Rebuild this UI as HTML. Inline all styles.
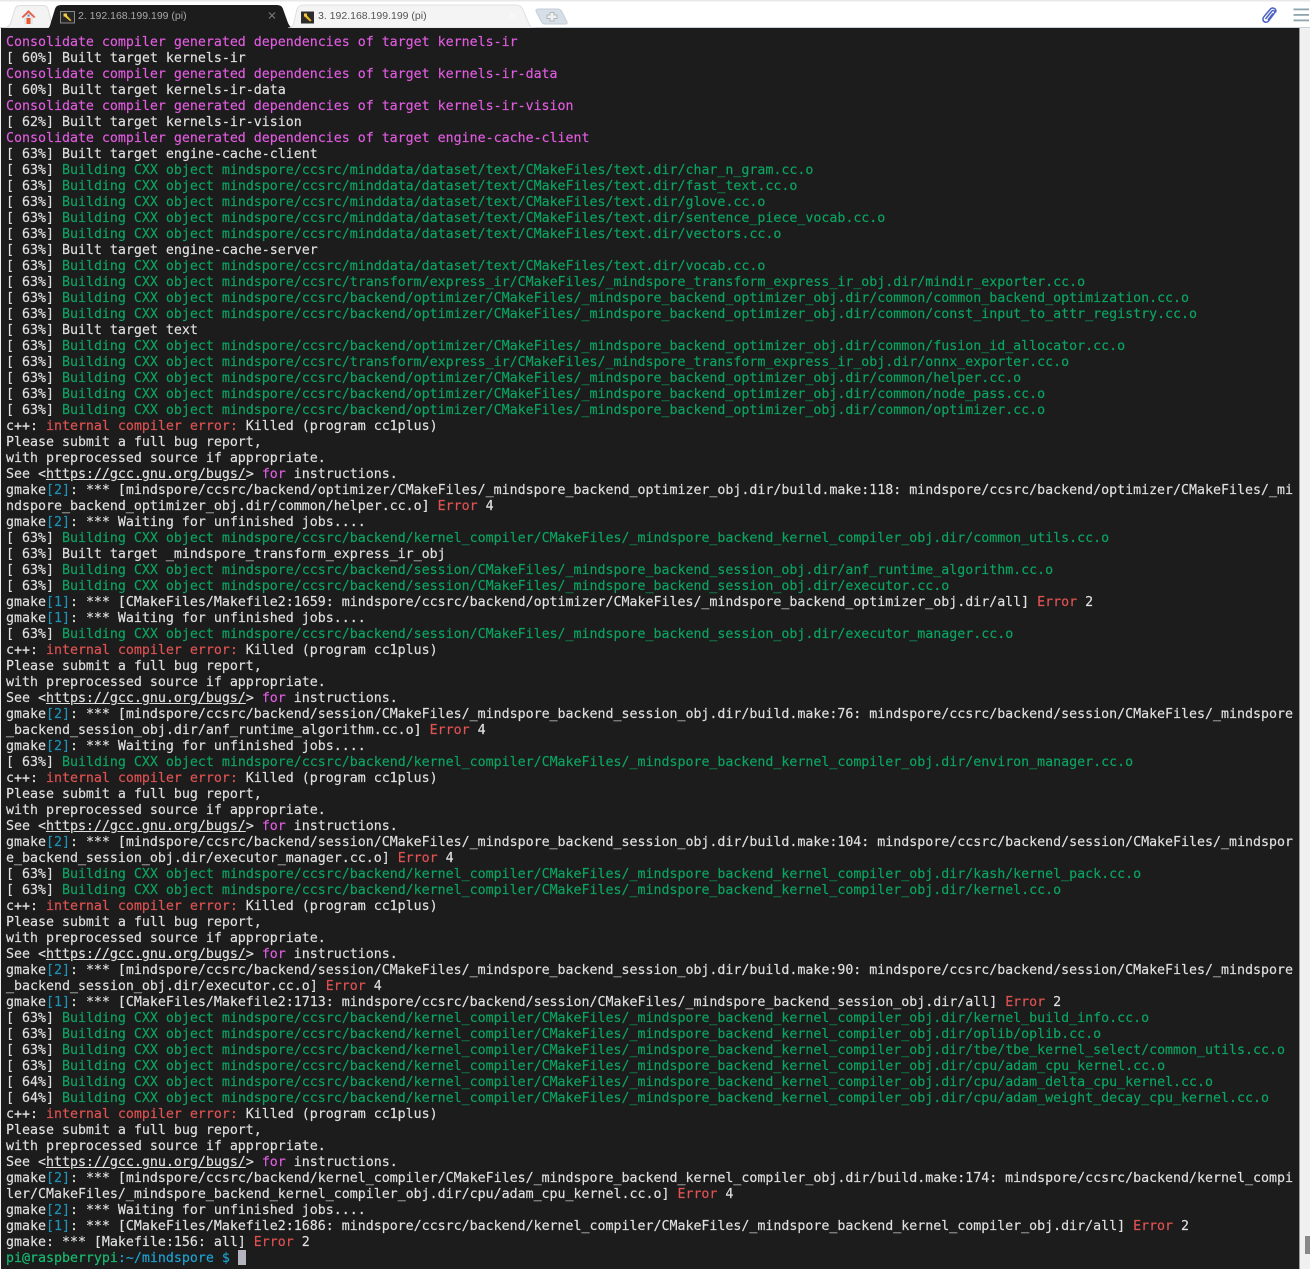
<!DOCTYPE html>
<html><head><meta charset="utf-8"><style>
html,body{margin:0;padding:0;width:1310px;height:1269px;overflow:hidden;background:#f0f0f0}
#top{position:absolute;left:0;top:0;width:1310px;height:29px;background:#fff}
#top svg{position:absolute;left:0;top:0}
.tab{position:absolute;top:10px;font:10.5px/12px "Liberation Sans",sans-serif;}
#term{position:absolute;left:1px;top:28px;width:1298px;height:1241px;background:#1c1c1c}
#side{position:absolute;left:1299px;top:28px;width:11px;height:1241px;background:#f0f0f0;border-left:1px solid #999;box-sizing:border-box}
#thumb{position:absolute;left:1305px;top:1236px;width:5px;height:18px;background:#888}
#cur{position:absolute;left:238px;top:1250px;width:8px;height:15px;background:#b4b4be}
pre{position:absolute;left:6px;top:35px;margin:0;font:13.3px/16px "DejaVu Sans Mono",monospace;letter-spacing:-.012px;color:#e0e0e0;filter:blur(.25px);-webkit-text-stroke:.15px}
i{font-style:normal}
.m{color:#e25ce0}.g{color:#0ba560}.r{color:#e25252}.c{color:#1c93b8}.u{text-decoration:underline}
.p{color:#16bd72}.b{color:#1ea3d2}
</style></head><body>
<div id="top"><svg width="1310" height="29" viewBox="0 0 1310 29">
<rect x="0" y="0" width="1310" height="1.5" fill="#e8e8e8"/>
<rect x="0" y="27" width="1310" height="1.5" fill="#c8d0d8"/>
<path d="M3 28C8 28 10 25 11 22L15 9C16 6 18 5.500 21 5.500H43C46 5.500 47 6.500 48 9L53 28Z" fill="#f3f3f3" stroke="#ddd"/>
<path d="M46 29C49 29 50 26 51 22L55 9C56 6 58 5 62 5H276C280 5 282 6 283 9L288 23C290 27 292 29 296 29Z" fill="#1c1c1c"/>
<path d="M288 28C292 28 293 26 294 22L297 9C298 6 300 5 304 5H515C520 5 522 7 523 10L529 24C530 27 532 28 536 28Z" fill="#f4f4f4" stroke="#e0e0e0"/>
<path d="M538 9H558C560 9 561 10 562 12L567 22C567.500 23.500 567 24 565 24H545C543 24 542 23 541 21L536 11C535.500 10 536.500 9 538 9Z" fill="#d6dfe8" stroke="#c5ced8"/>
<path d="M550 12.500H554V15H557V18.500H554V21H550V18.500H547V15H550Z" fill="#eef1f4" stroke="#a8a8a8" stroke-width=".8"/>
<path d="M21.500 17L28.500 10L35.500 17L34 18L28.500 13L23 18Z" fill="#e8604a"/>
<path d="M24 17.500L28.500 13L33 17.500V24H24Z" fill="#e4e7ea"/>
<rect x="26.500" y="18" width="4" height="6" fill="#e85a2e"/>
<rect x="27.500" y="14.500" width="2" height="2" fill="#5a8fc0"/>
<rect x="60.500" y="11.500" width="14" height="11.500" fill="#262626" stroke="#888"/>
<path d="M65 14.500L67 15.500L71.500 20.500L70 21L64.500 16.500Z" fill="#f0c030"/>
<rect x="63.500" y="13.500" width="3.500" height="3" fill="#f5cf48"/>
<path d="M269 12.500L275 18.500M275 12.500L269 18.500" stroke="#777" stroke-width="1.200"/>
<rect x="301" y="11.500" width="13" height="12" fill="#2c2c2c"/>
<path d="M305 14.500L307 15.500L311.500 20.500L310 21.500L304.500 16.500Z" fill="#f0b820"/>
<rect x="304" y="13.500" width="3" height="3" fill="#f5c93a"/>
<path d="M509.500 13L515.500 19M515.500 13L509.500 19" stroke="#fafafa" stroke-width="1.200"/>
<path d="M1268 20L1273 13.500M1265.500 19L1271.500 11.500C1273 9.500 1275.500 11 1274.500 13L1268.500 21C1266.500 23.500 1262.500 22 1263 18.500C1263.200 17.500 1264 16.500 1264.500 16L1270 9.500C1272.500 6.500 1277 8.500 1275.500 12.500" fill="none" stroke="#4a60c4" stroke-width="1.500"/>
<rect x="1293.500" y="8.500" width="15.500" height="1.800" fill="#8fa5ad"/>
<rect x="1293.500" y="14" width="15.500" height="1.800" fill="#8fa5ad"/>
<rect x="1293.500" y="19.500" width="15.500" height="1.800" fill="#8fa5ad"/>
</svg>
<div class="tab" style="left:78px;color:#a8a8a8">2. 192.168.199.199 (pi)</div>
<div class="tab" style="left:318px;color:#555">3. 192.168.199.199 (pi)</div>
</div>
<div id="term"></div><div id="side"></div><div id="thumb"></div>
<pre><i class="m">Consolidate compiler generated dependencies of target kernels-ir</i>
[ 60%] Built target kernels-ir
<i class="m">Consolidate compiler generated dependencies of target kernels-ir-data</i>
[ 60%] Built target kernels-ir-data
<i class="m">Consolidate compiler generated dependencies of target kernels-ir-vision</i>
[ 62%] Built target kernels-ir-vision
<i class="m">Consolidate compiler generated dependencies of target engine-cache-client</i>
[ 63%] Built target engine-cache-client
[ 63%] <i class="g">Building CXX object mindspore/ccsrc/minddata/dataset/text/CMakeFiles/text.dir/char_n_gram.cc.o</i>
[ 63%] <i class="g">Building CXX object mindspore/ccsrc/minddata/dataset/text/CMakeFiles/text.dir/fast_text.cc.o</i>
[ 63%] <i class="g">Building CXX object mindspore/ccsrc/minddata/dataset/text/CMakeFiles/text.dir/glove.cc.o</i>
[ 63%] <i class="g">Building CXX object mindspore/ccsrc/minddata/dataset/text/CMakeFiles/text.dir/sentence_piece_vocab.cc.o</i>
[ 63%] <i class="g">Building CXX object mindspore/ccsrc/minddata/dataset/text/CMakeFiles/text.dir/vectors.cc.o</i>
[ 63%] Built target engine-cache-server
[ 63%] <i class="g">Building CXX object mindspore/ccsrc/minddata/dataset/text/CMakeFiles/text.dir/vocab.cc.o</i>
[ 63%] <i class="g">Building CXX object mindspore/ccsrc/transform/express_ir/CMakeFiles/_mindspore_transform_express_ir_obj.dir/mindir_exporter.cc.o</i>
[ 63%] <i class="g">Building CXX object mindspore/ccsrc/backend/optimizer/CMakeFiles/_mindspore_backend_optimizer_obj.dir/common/common_backend_optimization.cc.o</i>
[ 63%] <i class="g">Building CXX object mindspore/ccsrc/backend/optimizer/CMakeFiles/_mindspore_backend_optimizer_obj.dir/common/const_input_to_attr_registry.cc.o</i>
[ 63%] Built target text
[ 63%] <i class="g">Building CXX object mindspore/ccsrc/backend/optimizer/CMakeFiles/_mindspore_backend_optimizer_obj.dir/common/fusion_id_allocator.cc.o</i>
[ 63%] <i class="g">Building CXX object mindspore/ccsrc/transform/express_ir/CMakeFiles/_mindspore_transform_express_ir_obj.dir/onnx_exporter.cc.o</i>
[ 63%] <i class="g">Building CXX object mindspore/ccsrc/backend/optimizer/CMakeFiles/_mindspore_backend_optimizer_obj.dir/common/helper.cc.o</i>
[ 63%] <i class="g">Building CXX object mindspore/ccsrc/backend/optimizer/CMakeFiles/_mindspore_backend_optimizer_obj.dir/common/node_pass.cc.o</i>
[ 63%] <i class="g">Building CXX object mindspore/ccsrc/backend/optimizer/CMakeFiles/_mindspore_backend_optimizer_obj.dir/common/optimizer.cc.o</i>
c++: <i class="r">internal compiler error:</i> Killed (program cc1plus)
Please submit a full bug report,
with preprocessed source if appropriate.
See &lt;<i class="u">https://gcc.gnu.org/bugs/</i>&gt; <i class="m">for</i> instructions.
gmake<i class="c">[2]</i>: *** [mindspore/ccsrc/backend/optimizer/CMakeFiles/_mindspore_backend_optimizer_obj.dir/build.make:118: mindspore/ccsrc/backend/optimizer/CMakeFiles/_mi
ndspore_backend_optimizer_obj.dir/common/helper.cc.o] <i class="r">Error</i> 4
gmake<i class="c">[2]</i>: *** Waiting for unfinished jobs....
[ 63%] <i class="g">Building CXX object mindspore/ccsrc/backend/kernel_compiler/CMakeFiles/_mindspore_backend_kernel_compiler_obj.dir/common_utils.cc.o</i>
[ 63%] Built target _mindspore_transform_express_ir_obj
[ 63%] <i class="g">Building CXX object mindspore/ccsrc/backend/session/CMakeFiles/_mindspore_backend_session_obj.dir/anf_runtime_algorithm.cc.o</i>
[ 63%] <i class="g">Building CXX object mindspore/ccsrc/backend/session/CMakeFiles/_mindspore_backend_session_obj.dir/executor.cc.o</i>
gmake<i class="c">[1]</i>: *** [CMakeFiles/Makefile2:1659: mindspore/ccsrc/backend/optimizer/CMakeFiles/_mindspore_backend_optimizer_obj.dir/all] <i class="r">Error</i> 2
gmake<i class="c">[1]</i>: *** Waiting for unfinished jobs....
[ 63%] <i class="g">Building CXX object mindspore/ccsrc/backend/session/CMakeFiles/_mindspore_backend_session_obj.dir/executor_manager.cc.o</i>
c++: <i class="r">internal compiler error:</i> Killed (program cc1plus)
Please submit a full bug report,
with preprocessed source if appropriate.
See &lt;<i class="u">https://gcc.gnu.org/bugs/</i>&gt; <i class="m">for</i> instructions.
gmake<i class="c">[2]</i>: *** [mindspore/ccsrc/backend/session/CMakeFiles/_mindspore_backend_session_obj.dir/build.make:76: mindspore/ccsrc/backend/session/CMakeFiles/_mindspore
_backend_session_obj.dir/anf_runtime_algorithm.cc.o] <i class="r">Error</i> 4
gmake<i class="c">[2]</i>: *** Waiting for unfinished jobs....
[ 63%] <i class="g">Building CXX object mindspore/ccsrc/backend/kernel_compiler/CMakeFiles/_mindspore_backend_kernel_compiler_obj.dir/environ_manager.cc.o</i>
c++: <i class="r">internal compiler error:</i> Killed (program cc1plus)
Please submit a full bug report,
with preprocessed source if appropriate.
See &lt;<i class="u">https://gcc.gnu.org/bugs/</i>&gt; <i class="m">for</i> instructions.
gmake<i class="c">[2]</i>: *** [mindspore/ccsrc/backend/session/CMakeFiles/_mindspore_backend_session_obj.dir/build.make:104: mindspore/ccsrc/backend/session/CMakeFiles/_mindspor
e_backend_session_obj.dir/executor_manager.cc.o] <i class="r">Error</i> 4
[ 63%] <i class="g">Building CXX object mindspore/ccsrc/backend/kernel_compiler/CMakeFiles/_mindspore_backend_kernel_compiler_obj.dir/kash/kernel_pack.cc.o</i>
[ 63%] <i class="g">Building CXX object mindspore/ccsrc/backend/kernel_compiler/CMakeFiles/_mindspore_backend_kernel_compiler_obj.dir/kernel.cc.o</i>
c++: <i class="r">internal compiler error:</i> Killed (program cc1plus)
Please submit a full bug report,
with preprocessed source if appropriate.
See &lt;<i class="u">https://gcc.gnu.org/bugs/</i>&gt; <i class="m">for</i> instructions.
gmake<i class="c">[2]</i>: *** [mindspore/ccsrc/backend/session/CMakeFiles/_mindspore_backend_session_obj.dir/build.make:90: mindspore/ccsrc/backend/session/CMakeFiles/_mindspore
_backend_session_obj.dir/executor.cc.o] <i class="r">Error</i> 4
gmake<i class="c">[1]</i>: *** [CMakeFiles/Makefile2:1713: mindspore/ccsrc/backend/session/CMakeFiles/_mindspore_backend_session_obj.dir/all] <i class="r">Error</i> 2
[ 63%] <i class="g">Building CXX object mindspore/ccsrc/backend/kernel_compiler/CMakeFiles/_mindspore_backend_kernel_compiler_obj.dir/kernel_build_info.cc.o</i>
[ 63%] <i class="g">Building CXX object mindspore/ccsrc/backend/kernel_compiler/CMakeFiles/_mindspore_backend_kernel_compiler_obj.dir/oplib/oplib.cc.o</i>
[ 63%] <i class="g">Building CXX object mindspore/ccsrc/backend/kernel_compiler/CMakeFiles/_mindspore_backend_kernel_compiler_obj.dir/tbe/tbe_kernel_select/common_utils.cc.o</i>
[ 63%] <i class="g">Building CXX object mindspore/ccsrc/backend/kernel_compiler/CMakeFiles/_mindspore_backend_kernel_compiler_obj.dir/cpu/adam_cpu_kernel.cc.o</i>
[ 64%] <i class="g">Building CXX object mindspore/ccsrc/backend/kernel_compiler/CMakeFiles/_mindspore_backend_kernel_compiler_obj.dir/cpu/adam_delta_cpu_kernel.cc.o</i>
[ 64%] <i class="g">Building CXX object mindspore/ccsrc/backend/kernel_compiler/CMakeFiles/_mindspore_backend_kernel_compiler_obj.dir/cpu/adam_weight_decay_cpu_kernel.cc.o</i>
c++: <i class="r">internal compiler error:</i> Killed (program cc1plus)
Please submit a full bug report,
with preprocessed source if appropriate.
See &lt;<i class="u">https://gcc.gnu.org/bugs/</i>&gt; <i class="m">for</i> instructions.
gmake<i class="c">[2]</i>: *** [mindspore/ccsrc/backend/kernel_compiler/CMakeFiles/_mindspore_backend_kernel_compiler_obj.dir/build.make:174: mindspore/ccsrc/backend/kernel_compi
ler/CMakeFiles/_mindspore_backend_kernel_compiler_obj.dir/cpu/adam_cpu_kernel.cc.o] <i class="r">Error</i> 4
gmake<i class="c">[2]</i>: *** Waiting for unfinished jobs....
gmake<i class="c">[1]</i>: *** [CMakeFiles/Makefile2:1686: mindspore/ccsrc/backend/kernel_compiler/CMakeFiles/_mindspore_backend_kernel_compiler_obj.dir/all] <i class="r">Error</i> 2
gmake: *** [Makefile:156: all] <i class="r">Error</i> 2
<i class="p">pi@raspberrypi</i><i class="b">:~/mindspore $</i></pre>
<div id="cur"></div>
</body></html>
